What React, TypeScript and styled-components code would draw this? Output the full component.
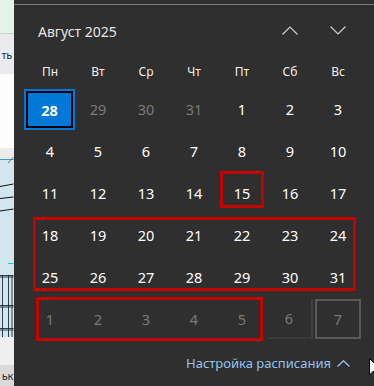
import React from 'react'
import styled, { createGlobalStyle } from 'styled-components'

const GlobalStyle = createGlobalStyle`
  html, body {
    margin: 0;
    padding: 0;
    width: 374px;
    height: 386px;
    overflow: hidden;
    background: #2f2f2f;
  }
  body {
    font-family: "Noto Sans", "Open Sans", sans-serif;
  }
`

type DayState = 'normal' | 'muted' | 'today' | 'hover' | 'reveal'

interface Day {
  n: number
  state: DayState
}

const WEEKDAYS = ['Пн', 'Вт', 'Ср', 'Чт', 'Пт', 'Сб', 'Вс']

// six weeks shown in the flyout, July 28 is today
const buildDays = (): Day[] => {
  const days: Day[] = [{ n: 28, state: 'today' }]
  for (let n = 29; n <= 31; n++) days.push({ n, state: 'muted' })
  for (let n = 1; n <= 31; n++) days.push({ n, state: 'normal' })
  for (let n = 1; n <= 7; n++) {
    days.push({ n, state: n === 7 ? 'hover' : n === 6 ? 'reveal' : 'muted' })
  }
  return days
}

export default function App() {
  const days = buildDays()
  return (
    <Screen>
      <GlobalStyle />
      <BackgroundApp>
        <GreenBand />
        <GreyBand>
          <StripText>ть</StripText>
        </GreyBand>
        <WhiteBand />
        <ChartArea />
        <LightBand />
        <StatusBand>
          <StripText>ьк</StripText>
        </StatusBand>
      </BackgroundApp>

      <Flyout>
        <Header>
          <MonthTitle>Август 2025</MonthTitle>
          <NavButtons>
            <NavButton aria-label="Предыдущий месяц">
              <svg width="16" height="9" viewBox="0 0 16 9">
                <polyline points="0.5,8.5 8,1 15.5,8.5" fill="none" stroke="#cfcfcf" strokeWidth="1.2" />
              </svg>
            </NavButton>
            <NavButton aria-label="Следующий месяц">
              <svg width="16" height="9" viewBox="0 0 16 9">
                <polyline points="0.5,0.5 8,8 15.5,0.5" fill="none" stroke="#cfcfcf" strokeWidth="1.2" />
              </svg>
            </NavButton>
          </NavButtons>
        </Header>

        <Grid>
          {WEEKDAYS.map((d) => (
            <WeekdayName key={d}>{d}</WeekdayName>
          ))}
          {days.map((d, i) => (
            <DayCell key={i} $state={d.state}>
              {d.n}
            </DayCell>
          ))}
        </Grid>

        <Footer>
          <FooterLink>
            Настройка расписания
            <svg width="13" height="7" viewBox="0 0 13 7">
              <polyline points="0.5,6.5 6.5,0.8 12.5,6.5" fill="none" stroke="#94c4ea" strokeWidth="1.3" />
            </svg>
          </FooterLink>
        </Footer>

        <Marker $x={206} $y={171} $w={44} $h={37} />
        <Marker $x={19} $y={217} $w={323} $h={74} />
        <Marker $x={22} $y={297} $w={227} $h={44} />
      </Flyout>

      <Cursor width="14" height="22" viewBox="0 0 14 22">
        <path d="M0.5,0.5 L0.5,17 L4.5,13 L7.5,20 L10,19 L7,12 L12.5,12 Z" fill="#fff" stroke="#000" strokeWidth="1" />
      </Cursor>
    </Screen>
  )
}

const ChartArea = () => (
  <ChartSvg width="14" height="189" viewBox="0 0 14 189">
    <rect x="0" y="0" width="14" height="11" fill="#ececec" />
    <rect x="0" y="11" width="14" height="1" fill="#3d9ad9" />
    <rect x="0" y="12" width="14" height="177" fill="#d3e6ef" />
    <line x1="8" y1="15" x2="13.5" y2="9" stroke="#555" strokeWidth="0.8" />
    <line x1="0" y1="38.5" x2="13.5" y2="36" stroke="#111" strokeWidth="1" />
    <line x1="0" y1="50.5" x2="13.5" y2="49" stroke="#111" strokeWidth="1" />
    <line x1="0" y1="63" x2="13.5" y2="61" stroke="#111" strokeWidth="1" />
    <line x1="8" y1="115.5" x2="13.5" y2="115.5" stroke="#1ec8e0" strokeWidth="1" />
    <g stroke="#1a2a33" strokeWidth="0.9">
      <line x1="0" y1="127.5" x2="13.5" y2="127.5" />
      <line x1="0" y1="129" x2="13.5" y2="129" />
      <line x1="0" y1="157.5" x2="13.5" y2="157.5" />
      <line x1="0" y1="159" x2="13.5" y2="159" />
      <line x1="0" y1="180.5" x2="13.5" y2="180.5" />
      <line x1="0" y1="182" x2="13.5" y2="182" />
      <line x1="2.5" y1="127" x2="2.5" y2="189" />
      <line x1="8.5" y1="127" x2="8.5" y2="189" />
      <line x1="12" y1="127" x2="12" y2="189" />
    </g>
  </ChartSvg>
)

const Screen = styled.div`
  position: relative;
  display: flex;
  width: 374px;
  height: 386px;
  overflow: hidden;
`

const BackgroundApp = styled.div`
  display: flex;
  flex-direction: column;
  width: 14px;
  flex-shrink: 0;
  overflow: hidden;
  box-shadow: inset -1px 0 0 #9a9a9a;
`

const GreenBand = styled.div`
  height: 33px;
  background: #e2f5e7;
  border-bottom: 1px solid #c9d2cc;
`

const GreyBand = styled.div`
  display: flex;
  justify-content: flex-end;
  align-items: center;
  height: 40px;
  overflow: hidden;
  background: #ebebef;
`

const StripText = styled.span`
  flex-shrink: 0;
  white-space: nowrap;
  padding-right: 2px;
  font-size: 11px;
  letter-spacing: -0.3px;
  color: #1d2f3c;
`

const WhiteBand = styled.div`
  height: 74px;
  background: #fdfdfd;
`

const ChartSvg = styled.svg`
  display: block;
  flex-shrink: 0;
`

const LightBand = styled.div`
  height: 28px;
  background: #efefef;
`

const StatusBand = styled.div`
  display: flex;
  justify-content: flex-end;
  align-items: center;
  flex: 1;
  overflow: hidden;
  background: #dadada;

  ${StripText} {
    padding-right: 1px;
  }
`

const Flyout = styled.div`
  position: relative;
  display: flex;
  flex-direction: column;
  width: 360px;
  height: 386px;
  padding-top: 4px;
  box-sizing: border-box;
  background: #2f2f2f;
  color: #fff;
`

const Header = styled.div`
  display: flex;
  align-items: center;
  justify-content: space-between;
  height: 52px;
  box-sizing: border-box;
  padding: 0 12px 0 24px;
  border-top: 1px solid #7a7a7a;
`

const MonthTitle = styled.div`
  font-size: 14px;
  color: #e4e4e4;
  padding-top: 2px;
`

const NavButtons = styled.div`
  display: flex;
`

const NavButton = styled.button`
  display: flex;
  align-items: center;
  justify-content: center;
  width: 48px;
  height: 32px;
  padding: 0;
  border: none;
  background: transparent;
  cursor: pointer;
`

const Grid = styled.div`
  display: grid;
  grid-template-columns: repeat(7, 48px);
  grid-template-rows: 32px repeat(6, 42px);
  padding: 0 12px;
`

const WeekdayName = styled.div`
  display: flex;
  align-items: center;
  justify-content: center;
  font-size: 12px;
  color: #f0f0f0;
  padding-bottom: 1px;
`

const DayCell = styled.div<{ $state: DayState }>`
  display: flex;
  align-items: center;
  justify-content: center;
  box-sizing: border-box;
  font-size: 14.5px;
  color: ${(p): string => (p.$state === 'normal' || p.$state === 'today' ? '#ffffff' : '#7a7a7a')};
  font-weight: ${(p): number => (p.$state === 'today' ? 700 : 400)};

  ${(p): string =>
    p.$state === 'today'
      ? `
    margin: 1px -1px 0 -2px;
    background: #0078d7;
    border: 2px solid #0078d7;
    box-shadow: inset 0 0 0 2px #000;
  `
      : ''}

  ${(p): string =>
    p.$state === 'hover'
      ? `
    margin: 1px;
    border: 2px solid #5a5a5a;
  `
      : ''}

  ${(p): string =>
    p.$state === 'reveal'
      ? `
    margin: 1px;
    border-right: 2px solid #414141;
    border-bottom: 2px solid #393939;
  `
      : ''}
`

const Footer = styled.div`
  display: flex;
  justify-content: flex-end;
  align-items: center;
  flex: 1;
  padding-right: 24px;
`

const FooterLink = styled.div`
  display: flex;
  align-items: center;
  gap: 6px;
  font-size: 13px;
  color: #94c4ea;
  cursor: pointer;

  svg {
    margin-top: 1px;
  }
`

// red annotation rectangles drawn over the calendar
const Marker = styled.div<{ $x: number; $y: number; $w: number; $h: number }>`
  position: absolute;
  left: ${(p): number => p.$x}px;
  top: ${(p): number => p.$y}px;
  width: ${(p): number => p.$w}px;
  height: ${(p): number => p.$h}px;
  box-sizing: border-box;
  border: 3px solid #c80000;
  pointer-events: none;
`

const Cursor = styled.svg`
  position: absolute;
  left: 369px;
  top: 358px;
`
